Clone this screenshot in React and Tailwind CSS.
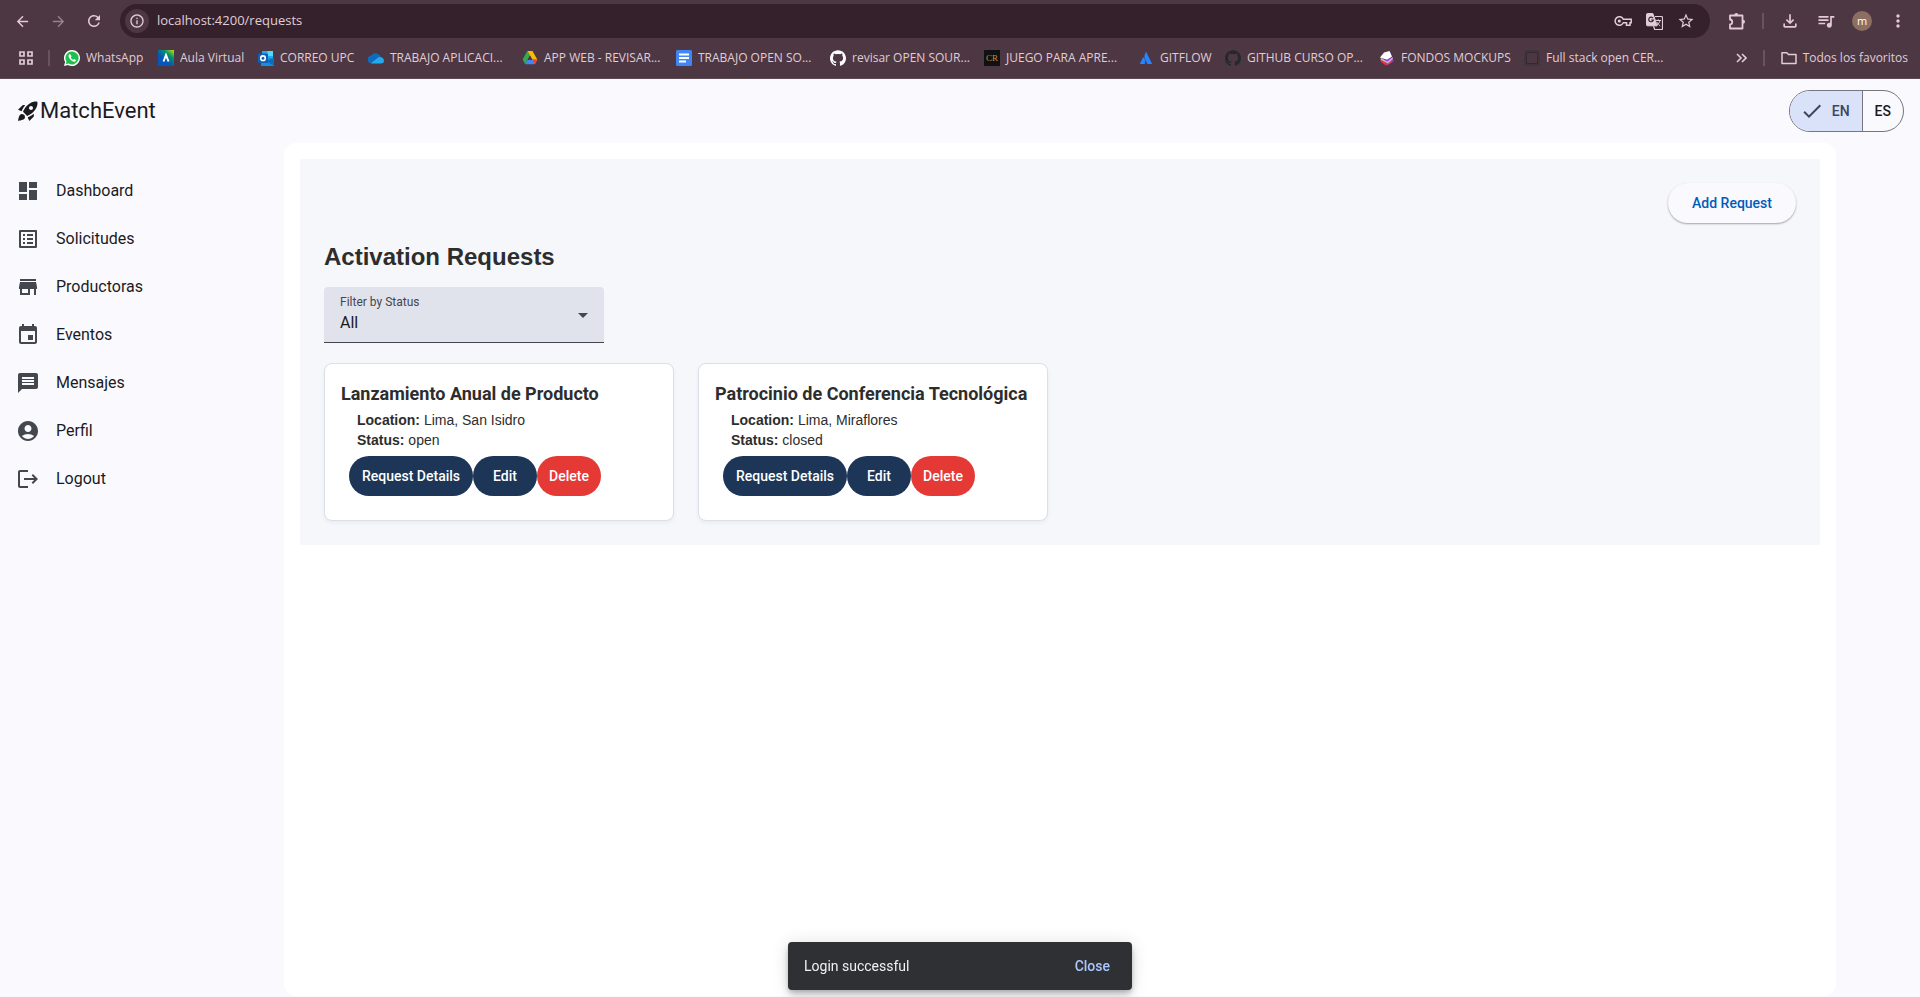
import { SiGithub, SiAtlassian } from "react-icons/si";
import {
  MdDashboard, MdListAlt, MdStore, MdEvent, MdMessage, MdAccountCircle, MdLogout, MdRocketLaunch,
  MdOutlineInfo, MdArrowBack, MdArrowForward, MdRefresh, MdStarBorder, MdOutlineFileDownload,
  MdMoreVert, MdArrowDropDown, MdCheck, MdQueueMusic,
} from "react-icons/md";

const drive = (
  <svg viewBox="0 0 16 16" className="size-4">
    <path d="M5.3 1h5.2L8 5.4z" fill="#188038" />
    <path d="M5.3 1 .6 9.6l2.5 4.6L8 5.5z" fill="#34a853" />
    <path d="M10.5 1H5.4l5 8.7h5z" fill="#fbbc04" />
    <path d="M15.4 9.7H5.6L3.1 14.2h9.8z" fill="#4285f4" />
    <path d="M15.4 9.7h-4.8l2.3 4.5z" fill="#ea4335" />
    <path d="M8 5.5 5.6 9.7h4.8z" fill="#4c3743" />
  </svg>
);

const bookmarks = [
  {
    label: "WhatsApp", width: "w-[94px]",
    icon: (
      <svg viewBox="0 0 24 24" className="size-4">
        <path d="M12 0a12 12 0 0 0-10.300 18.100L0 24l6-1.600A12 12 0 1 0 12 0z" fill="#fff" />
        <path d="M12 2.200a9.800 9.800 0 0 0-8.300 15l-1 4 4-1A9.800 9.800 0 1 0 12 2.200z" fill="#1fbf4b" />
        <path d="M8.500 6.500c-.5 0-2 1-1.700 3 .4 3 4 7 7.700 8 2 .5 3.500-.8 3.500-2.500l-2.700-1.500-1.500 1.300c-1.500-.6-3-2-3.600-3.600l1.100-1.400-1.300-3z" fill="#fff" />
      </svg>
    ),
  },
  {
    label: "Aula Virtual", width: "w-[100px]",
    icon: (
      <svg viewBox="0 0 16 16" className="size-4">
        <defs>
          <linearGradient id="aula" x1="1" y1="0" x2="0.3" y2="0.8">
            <stop offset="0" stopColor="#c8e600" />
            <stop offset="0.4" stopColor="#0a8f6a" />
            <stop offset="0.8" stopColor="#0557b8" />
          </linearGradient>
        </defs>
        <rect width="16" height="16" fill="url(#aula)" />
        <path d="M5.500 11.500 8 5l2.500 6.500" fill="none" stroke="#fff" strokeWidth="2" />
      </svg>
    ),
  },
  {
    label: "CORREO UPC", width: "w-[110px]",
    icon: (
      <svg viewBox="0 0 16 16" className="size-4">
        <rect x="4" y="1" width="11" height="9" fill="#28a8ea" />
        <rect x="9.500" y="1" width="5.500" height="5" fill="#50d9ff" />
        <path d="M3 8h13v8H3z" fill="#1490df" />
        <path d="M16 8v8l-8-5z" fill="#0f6cbd" />
        <rect x="0" y="3.500" width="10" height="9.500" rx="1" fill="#0f5fb4" />
        <circle cx="5" cy="8.200" r="2.300" fill="none" stroke="#fff" strokeWidth="1.600" />
      </svg>
    ),
  },
  {
    label: "TRABAJO APLICACI...", width: "w-[154px]",
    icon: (
      <svg viewBox="0 0 16 16" className="size-4">
        <path d="M4 13.500a4 4 0 0 1-.6-8A5 5 0 0 1 12 5.800l1 1.500-8 6.200z" fill="#0f6cbd" />
        <path d="M3 13.200 9.500 8A4 4 0 0 1 16 10.500a3 3 0 0 1-3 3H4z" fill="#28a8ea" />
      </svg>
    ),
  },
  { label: "APP WEB - REVISAR...", width: "w-[154px]", icon: drive },
  {
    label: "TRABAJO OPEN SO...", width: "w-[154px]",
    icon: (
      <svg viewBox="0 0 16 16" className="size-4">
        <rect width="16" height="16" rx="1.500" fill="#4285f4" />
        <path d="M3 4.500h10M3 8h10M3 11.500h7" stroke="#fff" strokeWidth="1.800" />
      </svg>
    ),
  },
  { label: "revisar OPEN SOUR...", width: "w-[154px]", icon: <SiGithub className="size-4 text-white" /> },
  {
    label: "JUEGO PARA APRE...", width: "w-[154px]",
    icon: (
      <span className="flex size-4 items-center justify-center bg-[#111] font-['Liberation_Serif',serif] text-[9px] text-[#c98a3c]">CR</span>
    ),
  },
  { label: "GITFLOW", width: "w-[87px]", icon: <SiAtlassian className="size-4 p-[2px] text-[#2684ff]" /> },
  { label: "GITHUB CURSO OP...", width: "w-[154px]", icon: <SiGithub className="size-4 text-[#24292e]" /> },
  {
    label: "FONDOS MOCKUPS", width: "w-[145px]",
    icon: (
      <svg viewBox="0 0 16 16" className="size-4">
        <path d="m5 12 7-5 3 4-6 4z" fill="#9b2bf0" />
        <path d="m1 9 8 4 5-4-2 4-5 2.500L2 12z" fill="#e5304a" />
        <path d="m1.500 7.500 7 4 5-4.500.5 2-5 4.500-7-3.500z" fill="#b9b4c4" />
        <path d="M5 2.500 10.500 1 13 6.500 8 9.800 1 7.500z" fill="#fff" />
      </svg>
    ),
  },
  {
    label: "Full stack open CER...", width: "w-[140px]",
    icon: <span className="size-4 rounded-[3px] border-3 border-[#41343b] outline-1 -outline-offset-3 outline-[#33292f]" />,
  },
];

const nav = [
  { label: "Dashboard", Icon: MdDashboard },
  { label: "Solicitudes", Icon: MdListAlt },
  { label: "Productoras", Icon: MdStore },
  { label: "Eventos", Icon: MdEvent },
  { label: "Mensajes", Icon: MdMessage },
  { label: "Perfil", Icon: MdAccountCircle },
  { label: "Logout", Icon: MdLogout },
];

const requests = [
  { title: "Lanzamiento Anual de Producto", location: "Lima, San Isidro", status: "open" },
  { title: "Patrocinio de Conferencia Tecnológica", location: "Lima, Miraflores", status: "closed" },
];

function KeyIcon() {
  return (
    <svg viewBox="0 0 18 12" className="h-3 w-[18px]" fill="none" stroke="currentColor" strokeWidth="1.500">
      <path d="M9.300 4.200A4.300 4.300 0 1 0 9.300 7.800h3.200v2.500h3.500V7.800h1.200V4.200z" />
      <circle cx="5.300" cy="6" r="1.600" fill="currentColor" stroke="none" />
    </svg>
  );
}

function TranslateIcon() {
  return (
    <svg viewBox="0 0 17 17" className="size-[17px]" fill="none" stroke="currentColor">
      <path d="M1.500.5h5.300l1.300 3.300 3 9H1.500a1 1 0 0 1-1-1V1.500a1 1 0 0 1 1-1z" fill="currentColor" />
      <path d="M9 3.500h6.500a1 1 0 0 1 1 1v11a1 1 0 0 1-1 1H8.700l-1.200-3.300" strokeWidth="1.200" />
      <path d="M7 5.200A2.300 2.300 0 1 0 7.300 7H5.200" stroke="#35212c" strokeWidth="1.200" />
      <path d="M9.500 7.500H15M12.200 6.300v1.200M14 7.500c-.4 2-1.700 3.600-3 4.500M10.800 9c.7 1.500 2 2.800 3.400 4" strokeWidth="1" />
    </svg>
  );
}

function PuzzleIcon() {
  return (
    <svg viewBox="0 0 18 18" className="size-[18px]" fill="none" stroke="currentColor" strokeWidth="1.800" strokeLinejoin="round">
      <path d="M2 3.500h12.500V16.500H2v-4c3-.3 3-4.700 0-5z" />
      <path d="M6.300 3a2 2 0 0 1 4 0zM15 7.700a2 2 0 0 1 0 4z" fill="currentColor" stroke="none" />
    </svg>
  );
}

function BrowserBar() {
  return (
    <div className="border-b border-[#5a4a52] bg-[#4c3743] font-['Open_Sans',sans-serif] text-[#e0cdd6]">
      <div className="flex h-[42px] items-center px-3">
        <div className="flex items-center gap-4 text-[#e6c9d8]">
          <button aria-label="Back" className="flex size-5 items-center justify-center"><MdArrowBack className="size-[17px]" /></button>
          <button aria-label="Forward" className="flex size-5 items-center justify-center opacity-50"><MdArrowForward className="size-[17px]" /></button>
          <button aria-label="Reload" className="flex size-5 items-center justify-center"><MdRefresh className="size-[18px]" /></button>
        </div>
        <div className="ml-4 flex h-[34px] flex-1 items-center rounded-full bg-[#35212c] pr-[15px] pl-[5px]">
          <button aria-label="Site information" className="flex size-6 items-center justify-center rounded-full bg-[#4c3743]">
            <MdOutlineInfo className="size-4" />
          </button>
          <input aria-label="Address" defaultValue="localhost:4200/requests" className="ml-2 flex-1 bg-transparent text-[13px] outline-none" />
          <div className="flex items-center gap-[14px]">
            <button aria-label="Passwords"><KeyIcon /></button>
            <button aria-label="Translate"><TranslateIcon /></button>
            <button aria-label="Bookmark"><MdStarBorder className="size-[18px]" /></button>
          </div>
        </div>
        <div className="ml-[18px] flex items-center text-[#e6c9d8]">
          <button aria-label="Extensions"><PuzzleIcon /></button>
          <span className="mx-4 h-4 w-[2px] bg-[#6a525f]" />
          <button aria-label="Downloads"><MdOutlineFileDownload className="size-5" /></button>
          <button aria-label="Media" className="ml-4"><MdQueueMusic className="size-5" /></button>
          <button aria-label="Profile" className="ml-4 flex size-5 items-center justify-center rounded-full bg-[#8d6e63] text-[11px] text-white">m</button>
          <button aria-label="Menu" className="ml-4"><MdMoreVert className="size-5" /></button>
        </div>
      </div>
      <div className="flex h-9 items-start pt-2 pr-3 pl-[19px] text-xs leading-4">
        <button aria-label="Apps" className="mt-px">
          <svg viewBox="0 0 14 14" className="size-[14px]" fill="none" stroke="currentColor" strokeWidth="1.700">
            <path d="M1 1h4v4H1zM9 1h4v4H9zM1 9h4v4H1zM9 9h4v4H9z" />
          </svg>
        </button>
        <span className="mr-[14px] ml-[15px] h-4 w-[2px] bg-[#6a525f]" />
        {bookmarks.map((b) => (
          <a key={b.label} href="#" className={`flex shrink-0 items-center gap-[6px] whitespace-nowrap ${b.width}`}>
            <span className="flex size-4 shrink-0">{b.icon}</span>
            {b.label}
          </a>
        ))}
        <button aria-label="More bookmarks" className="mt-[3px] ml-auto">
          <svg viewBox="0 0 11 10" className="h-[10px] w-[11px]" fill="none" stroke="currentColor" strokeWidth="1.600">
            <path d="m1 1 4 4-4 4M6 1l4 4-4 4" />
          </svg>
        </button>
        <span className="mx-4 h-4 w-[2px] bg-[#6a525f]" />
        <a href="#" className="flex items-center gap-[6px] whitespace-nowrap">
          <svg viewBox="0 0 16 14" className="h-[14px] w-4" fill="none" stroke="currentColor" strokeWidth="1.500" strokeLinejoin="round">
            <path d="M1 12.500V1.800h4.800l1.700 1.700H15v9z" />
          </svg>
          Todos los favoritos
        </a>
      </div>
    </div>
  );
}

function RequestCard({ title, location, status }) {
  return (
    <article className="w-[350px] rounded-lg border border-[#dcdfe8] bg-white px-4 pt-[18px] pb-6 text-[#2d2d2d] shadow-[0_2px_4px_rgba(0,0,0,0.05)]">
      <h3 className="text-lg leading-6 font-bold">{title}</h3>
      <div className="px-4 pt-1 pb-[6px] font-['Liberation_Sans',sans-serif] text-sm leading-5">
        <p><strong>Location:</strong> {location}</p>
        <p><strong>Status:</strong> {status}</p>
      </div>
      <div className="flex px-2 text-sm font-medium text-white">
        <button className="h-10 w-31 rounded-full bg-[#1d3557]">Request Details</button>
        <button className="h-10 w-16 rounded-full bg-[#1d3557]">Edit</button>
        <button className="h-10 w-16 rounded-full bg-[#e53935]">Delete</button>
      </div>
    </article>
  );
}

export default function App() {
  return (
    <div className="flex min-h-screen flex-col bg-[#faf9fd] pb-px font-[Roboto,sans-serif] text-[#1a1b1f]">
      <BrowserBar />
      <header className="flex h-16 items-center justify-between px-4">
        <div className="flex items-center text-[22px] leading-7">
          <MdRocketLaunch className="size-6" />
          MatchEvent
        </div>
        <div className="flex h-[42px] overflow-hidden rounded-full border border-[#74777f] text-sm font-medium">
          <button aria-pressed="true" className="flex items-center gap-2 border-r border-[#74777f] bg-[#dae2f9] pr-3 pl-[10px] text-[#3e4759]">
            <MdCheck className="size-6" />EN
          </button>
          <button aria-pressed="false" className="px-3">ES</button>
        </div>
      </header>
      <div className="flex flex-1">
        <nav className="w-[284px] shrink-0 pt-6">
          {nav.map(({ label, Icon }) => (
            <a key={label} href="#" className="flex h-12 items-center gap-4 px-4 text-base">
              <Icon className="size-6 text-[#44474e]" />
              {label}
            </a>
          ))}
        </nav>
        <main className="mr-[84px] flex-1 rounded-xl bg-white p-4">
          <section className="bg-[#f5f7fb] p-6">
            <div className="flex justify-end">
              <button className="h-10 rounded-full bg-[#faf9fd] px-6 text-sm font-medium text-[#005cbb] shadow-[0_1px_2px_rgba(0,0,0,0.35)]">Add Request</button>
            </div>
            <h2 className="mt-4 font-['Liberation_Sans',sans-serif] text-2xl leading-9 font-bold text-[#2d2d2d]">Activation Requests</h2>
            <div className="relative mt-3 h-14 w-[280px] rounded-t border-b border-[#44474e] bg-[#e0e2ec]">
              <label htmlFor="status" className="absolute top-[7px] left-4 text-xs leading-4 text-[#44474e]">Filter by Status</label>
              <select id="status" className="size-full appearance-none px-4 pt-5 pb-1 text-base outline-none">
                <option>All</option>
                <option>open</option>
                <option>closed</option>
              </select>
              <MdArrowDropDown className="pointer-events-none absolute top-4 right-[9px] size-6 text-[#44474e]" />
            </div>
            <div className="mt-5 flex flex-wrap gap-6">
              {requests.map((r) => <RequestCard key={r.title} {...r} />)}
            </div>
          </section>
        </main>
      </div>
      <div role="status" className="fixed bottom-[7px] left-1/2 flex h-12 w-[344px] -translate-x-1/2 items-center justify-between rounded bg-[#2f3033] pr-[10px] pl-4 text-sm text-[#f2f0f4] shadow-[0_3px_5px_-1px_rgba(0,0,0,0.2),0_6px_10px_rgba(0,0,0,0.14),0_1px_18px_rgba(0,0,0,0.12)]">
        Login successful
        <button className="h-9 px-3 font-medium text-[#abc7ff]">Close</button>
      </div>
    </div>
  );
}
